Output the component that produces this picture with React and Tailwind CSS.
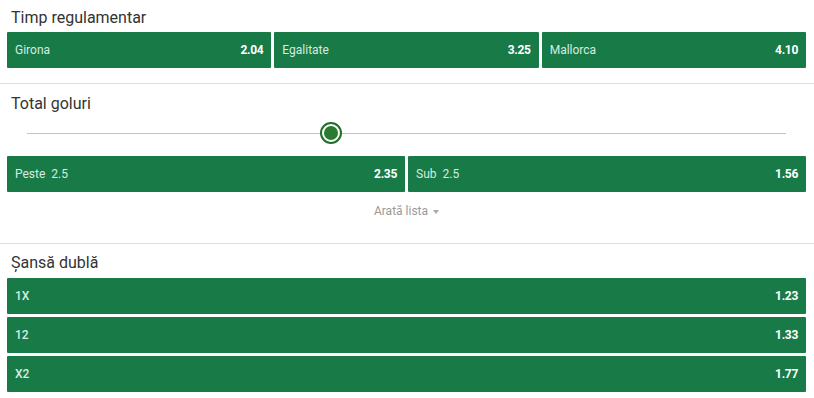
import React from 'react';

function Odd({ label, line, value, bold, grow = true }) {
  return (
    <button
      className={`flex h-9 items-center justify-between rounded-[1px] bg-[#177a47] px-2 text-[12px] ${grow ? 'flex-1' : 'w-full'}`}
    >
      <span className={`text-[#d7ece0] ${bold ? 'font-medium' : ''}`}>
        {label}
        {line && <span className="ml-[6px]">{line}</span>}
      </span>
      <span className="font-bold tracking-[-0.3px] text-white">{value}</span>
    </button>
  );
}

function Title({ children }) {
  return <h2 className="pl-1 text-[16px] leading-5 text-[#333]">{children}</h2>;
}

function App() {
  return (
    <div className="h-[398px] w-[814px] overflow-hidden bg-white font-['Roboto',sans-serif]">
      <section className="pr-2 pl-[7px] pt-2 pb-[15px]">
        <Title>Timp regulamentar</Title>
        <div className="mt-1 flex gap-[3px]">
          <Odd label="Girona" value="2.04" />
          <Odd label="Egalitate" value="3.25" />
          <Odd label="Mallorca" value="4.10" />
        </div>
      </section>

      <section className="border-t border-[#dedede] pr-2 pl-[7px] pt-[10px] pb-6">
        <Title>Total goluri</Title>
        <div className="relative mx-5 flex h-[38px] items-center">
          <div className="h-px w-full bg-[#c4c4c4]" />
          <div className="absolute left-[40%] top-1/2 flex h-[22px] w-[22px] -translate-x-1/2 -translate-y-1/2 items-center justify-center rounded-full border-2 border-[#1f6e2a] bg-white">
            <div className="h-[14px] w-[14px] rounded-full bg-[#2a7a2f]" />
          </div>
        </div>
        <div className="mt-1 flex gap-[3px]">
          <Odd label="Peste" line="2.5" value="2.35" />
          <Odd label="Sub" line="2.5" value="1.56" />
        </div>
        <div className="mt-[11px] flex items-center justify-center gap-[5px] text-[12px] leading-4 text-[#9a9a9a]">
          Arată lista
          <span className="mt-[2px] h-0 w-0 border-x-[3px] border-t-[4px] border-x-transparent border-t-[#aaa]" />
        </div>
      </section>

      <section className="border-t border-[#dedede] pr-2 pl-[7px] pt-[9px]">
        <Title>Șansă dublă</Title>
        <div className="mt-[5px] flex flex-col gap-[3px]">
          <Odd label="1X" value="1.23" bold grow={false} />
          <Odd label="12" value="1.33" bold grow={false} />
          <Odd label="X2" value="1.77" bold grow={false} />
        </div>
      </section>
    </div>
  );
}

export default App;
